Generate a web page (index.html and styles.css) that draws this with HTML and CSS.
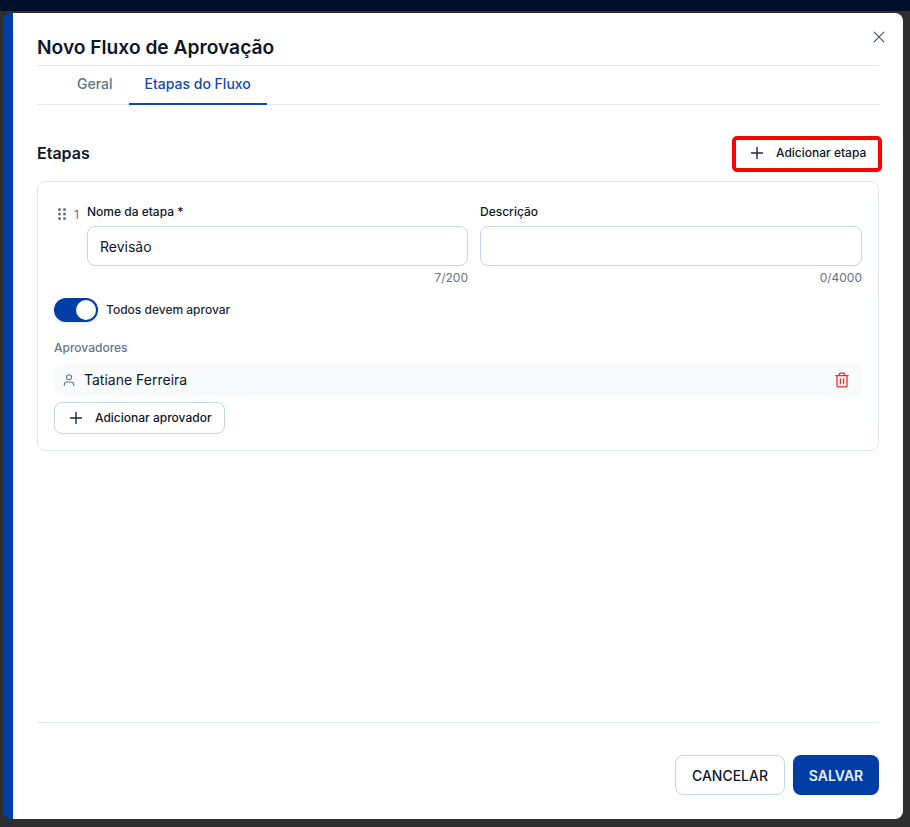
FILE: index.html
```html
<!DOCTYPE html>
<html lang="pt-BR">
<head>
  <meta charset="UTF-8">
  <meta name="viewport" content="width=device-width, initial-scale=1.0">
  <title>Novo Fluxo de Aprovação</title>
  <link rel="stylesheet" href="styles.css">
</head>
<body>

  <div class="top-strip"></div>

  <!-- Modal -->
  <div class="modal">
    <button class="close-button" aria-label="Fechar">
      <svg width="16" height="16" viewBox="0 0 16 16" fill="none" stroke="#475569" stroke-width="1.2" stroke-linecap="round"><path d="M3.2 3.2l9.6 9.6M12.8 3.2l-9.6 9.6"/></svg>
    </button>

    <header class="modal-header">
      <h1>Novo Fluxo de Aprovação</h1>
    </header>

    <!-- Tabs -->
    <nav class="tabs">
      <a class="tab">Geral</a>
      <a class="tab tab-active">Etapas do Fluxo</a>
    </nav>

    <!-- Steps -->
    <main class="modal-body">
      <div class="steps-header">
        <h2>Etapas</h2>
        <button class="outline-button add-step">
          <svg width="14" height="14" viewBox="0 0 14 14" fill="none" stroke="#1e293b" stroke-width="1.4" stroke-linecap="round"><path d="M7 1.5v11M1.5 7h11"/></svg>
          <span>Adicionar etapa</span>
        </button>
      </div>

      <section class="step-card">
        <div class="step-row">
          <div class="step-handle">
            <svg width="10" height="14" viewBox="0 0 10 14" fill="#64748b"><circle cx="2.5" cy="2.5" r="1.5"/><circle cx="7.5" cy="2.5" r="1.5"/><circle cx="2.5" cy="7" r="1.5"/><circle cx="7.5" cy="7" r="1.5"/><circle cx="2.5" cy="11.5" r="1.5"/><circle cx="7.5" cy="11.5" r="1.5"/></svg>
            <span>1</span>
          </div>
          <div class="field field-name">
            <label>Nome da etapa *</label>
            <div class="input">Revisão</div>
            <div class="counter">7/200</div>
          </div>
          <div class="field">
            <label>Descrição</label>
            <div class="input"></div>
            <div class="counter">0/4000</div>
          </div>
        </div>

        <div class="toggle-row">
          <div class="toggle"><div class="toggle-knob"></div></div>
          <span>Todos devem aprovar</span>
        </div>

        <div class="approvers-label">Aprovadores</div>
        <div class="approver">
          <svg width="14" height="14" viewBox="0 0 14 14" fill="none" stroke="#64748b" stroke-width="1.1" stroke-linecap="round"><circle cx="7" cy="4.2" r="2.5"/><path d="M2.3 12.5v-.8c0-1.6 1.3-2.7 2.9-2.7h3.6c1.6 0 2.9 1.1 2.9 2.7v.8"/></svg>
          <span class="approver-name">Tatiane Ferreira</span>
          <svg class="trash" width="16" height="16" viewBox="0 0 16 16" fill="none" stroke="#ef2b2b" stroke-width="1.3" stroke-linecap="round" stroke-linejoin="round"><path d="M1.8 3.6h12.4M5.4 3.4V2.2c0-.6.4-1 1-1h3.2c.6 0 1 .4 1 1v1.2M3 3.8v10c0 .6.4 1 1 1h8c.6 0 1-.4 1-1v-10M6.4 6.8v5M9.6 6.8v5"/></svg>
        </div>
        <button class="outline-button add-approver">
          <svg width="14" height="14" viewBox="0 0 14 14" fill="none" stroke="#1e293b" stroke-width="1.4" stroke-linecap="round"><path d="M7 1.5v11M1.5 7h11"/></svg>
          <span>Adicionar aprovador</span>
        </button>
      </section>
    </main>

    <footer class="modal-footer">
      <button class="cancel-button">CANCELAR</button>
      <button class="save-button">SALVAR</button>
    </footer>
  </div>

</body>
</html>
```

FILE: styles.css
```css
* {
  box-sizing: border-box;
}

html,
body {
  height: 100%;
}

body {
  margin: 0;
  background-color: #2e2e2e;
  font-family: Inter, "Liberation Sans", sans-serif;
  color: #0f172a;
  overflow: hidden;
}

.top-strip {
  height: 11px;
  background-color: #00102a;
}

.modal {
  position: relative;
  display: flex;
  flex-direction: column;
  width: 900px;
  height: 806px;
  margin: 2px 0 0 3px;
  padding: 0 24px;
  background-color: #fff;
  border-left: 10px solid #003da5;
  border-radius: 8px;
}

.close-button {
  position: absolute;
  top: 16px;
  right: 16px;
  display: flex;
  padding: 0;
  border: none;
  background: none;
}

.modal-header {
  height: 53px;
  border-bottom: 1px solid #e2e8f0;
}

h1 {
  margin: 0;
  padding-top: 21px;
  font-size: 19.2px;
  line-height: 26px;
  font-weight: 600;
}

.tabs {
  display: flex;
  height: 39px;
  padding-left: 24px;
  border-bottom: 1px solid #e2e8f0;
  font-size: 14px;
  font-weight: 500;
}

.tab {
  padding: 9px 16px 0;
  color: #64748b;
}

.tab-active {
  color: #0f4bb0;
  border-bottom: 2px solid #0f4bb0;
  margin-bottom: -1px;
}

.modal-body {
  flex: 1;
  padding-top: 31px;
}

.steps-header {
  display: flex;
  justify-content: space-between;
  align-items: center;
  height: 36px;
  margin-bottom: 9px;
}

h2 {
  margin: 0 0 3px;
  font-size: 16px;
  font-weight: 600;
}

.outline-button {
  display: flex;
  align-items: center;
  gap: 12px;
  background-color: #fff;
  border: 1px solid #c6d4e8;
  border-radius: 8px;
  font-family: inherit;
  font-size: 12px;
  font-weight: 500;
  color: #0f172a;
}

.outline-button span {
  padding-bottom: 2px;
}

.add-step {
  width: 150px;
  height: 36px;
  margin-right: -3px;
  padding: 0 0 2px 14px;
  border: 4px solid #ff0000;
  border-radius: 5px;
}

.step-card {
  height: 270px;
  padding: 22px 16px 16px;
  border: 1px solid #e2e8f0;
  border-radius: 8px;
}

.step-row {
  display: flex;
  gap: 12px;
}

.step-handle {
  display: flex;
  align-items: center;
  gap: 7px;
  width: 26px;
  height: 18px;
  margin-top: 1px;
  margin-left: 3px;
  margin-right: -8px;
  font-size: 12px;
  color: #64748b;
}

.field {
  flex: 1;
}

.field-name {
  flex: 0 0 381px;
}

.field label {
  display: block;
  height: 22px;
  font-size: 12px;
  line-height: 16px;
  font-weight: 500;
}

.input {
  height: 40px;
  padding: 0 12px;
  border: 1px solid #c6d4e8;
  border-radius: 8px;
  font-size: 14px;
  line-height: 40px;
}

.counter {
  height: 24px;
  font-size: 12px;
  line-height: 24px;
  text-align: right;
  color: #64748b;
}

.toggle-row {
  display: flex;
  align-items: center;
  gap: 8px;
  margin-top: 8px;
  font-size: 12px;
  font-weight: 500;
  color: #1e293b;
}

.toggle-row span {
  padding-bottom: 2px;
}

.toggle {
  width: 44px;
  height: 24px;
  padding: 2px;
  background-color: #003da5;
  border-radius: 12px;
  box-shadow: 0 2px 4px rgba(0, 0, 0, 0.08);
  display: flex;
  justify-content: flex-end;
}

.toggle-knob {
  width: 20px;
  height: 20px;
  background-color: #fff;
  border-radius: 50%;
}

.approvers-label {
  margin-top: 17px;
  font-size: 12px;
  line-height: 18px;
  font-weight: 500;
  color: #64748b;
}

.approver {
  display: flex;
  align-items: center;
  gap: 8px;
  height: 32px;
  margin-top: 7px;
  padding: 0 12px 0 8px;
  background-color: #f8fafc;
  border-radius: 8px;
  font-size: 14px;
}

.approver-name {
  flex: 1;
  padding-bottom: 2px;
}

.add-approver {
  width: 171px;
  height: 32px;
  margin-top: 6px;
  padding: 0 0 0 14px;
}

.modal-footer {
  display: flex;
  justify-content: flex-end;
  gap: 8px;
  height: 97px;
  padding-top: 32px;
  border-top: 1px solid #e2e8f0;
}

.cancel-button,
.save-button {
  height: 40px;
  border-radius: 8px;
  font-family: inherit;
  font-size: 14px;
  font-weight: 500;
}

.cancel-button {
  width: 110px;
  background-color: #fff;
  border: 1px solid #c6d4e8;
  color: #0f172a;
}

.save-button {
  width: 86px;
  background-color: #003da5;
  border: none;
  color: #eaf0fb;
  font-weight: 600;
}
```
